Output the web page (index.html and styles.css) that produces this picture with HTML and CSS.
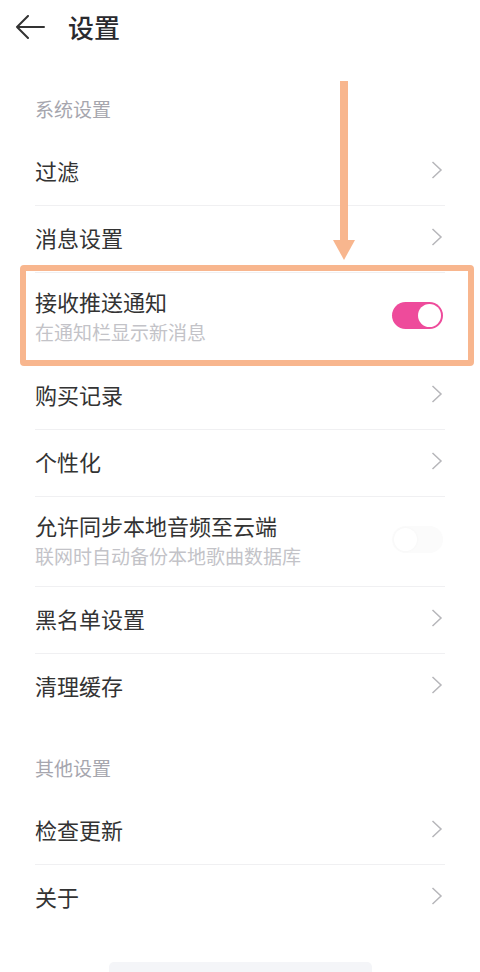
FILE: index.html
```html
<!DOCTYPE html>
<html lang="zh-CN">
<head>
    <meta charset="UTF-8">
    <meta name="viewport" content="width=device-width, initial-scale=1.0">
    <title>设置</title>
    <link rel="stylesheet" href="styles.css">
</head>
<body>
    <div class="page">
        <header class="topbar">
            <svg class="back" viewBox="0 0 30 24" width="30" height="24">
                <path d="M13 1 L2 12 L13 23 M2 12 H29" fill="none" stroke="#333" stroke-width="2" stroke-linecap="round" stroke-linejoin="round"/>
            </svg>
            <h1>设置</h1>
        </header>

        <div class="section-title">系统设置</div>
        <ul class="list">
            <li class="row">
                <div class="row-inner"><span class="label">过滤</span><svg class="chevron" viewBox="0 0 12 18"><path d="M1.5 1 L10 9 L1.5 17"/></svg></div>
            </li>
            <li class="row">
                <div class="row-inner"><span class="label">消息设置</span><svg class="chevron" viewBox="0 0 12 18"><path d="M1.5 1 L10 9 L1.5 17"/></svg></div>
            </li>
            <li class="row row-double highlighted">
                <div class="row-inner">
                    <div class="texts">
                        <span class="label">接收推送通知</span>
                        <span class="sub">在通知栏显示新消息</span>
                    </div>
                    <span class="switch on"><span class="knob"></span></span>
                </div>
                <div class="mark-box"></div>
            </li>
            <li class="row">
                <div class="row-inner"><span class="label">购买记录</span><svg class="chevron" viewBox="0 0 12 18"><path d="M1.5 1 L10 9 L1.5 17"/></svg></div>
            </li>
            <li class="row">
                <div class="row-inner"><span class="label">个性化</span><svg class="chevron" viewBox="0 0 12 18"><path d="M1.5 1 L10 9 L1.5 17"/></svg></div>
            </li>
            <li class="row row-double">
                <div class="row-inner">
                    <div class="texts">
                        <span class="label">允许同步本地音频至云端</span>
                        <span class="sub">联网时自动备份本地歌曲数据库</span>
                    </div>
                    <span class="switch off"><span class="knob"></span></span>
                </div>
            </li>
            <li class="row">
                <div class="row-inner"><span class="label">黑名单设置</span><svg class="chevron" viewBox="0 0 12 18"><path d="M1.5 1 L10 9 L1.5 17"/></svg></div>
            </li>
            <li class="row last">
                <div class="row-inner"><span class="label">清理缓存</span><svg class="chevron" viewBox="0 0 12 18"><path d="M1.5 1 L10 9 L1.5 17"/></svg></div>
            </li>
        </ul>

        <div class="section-title">其他设置</div>
        <ul class="list">
            <li class="row">
                <div class="row-inner"><span class="label">检查更新</span><svg class="chevron" viewBox="0 0 12 18"><path d="M1.5 1 L10 9 L1.5 17"/></svg></div>
            </li>
            <li class="row last">
                <div class="row-inner"><span class="label">关于</span><svg class="chevron" viewBox="0 0 12 18"><path d="M1.5 1 L10 9 L1.5 17"/></svg></div>
            </li>
        </ul>

        <div class="home-bar"></div>

        <!-- annotation arrow pointing at the push row -->
        <svg class="mark-arrow" viewBox="0 0 24 184" width="24" height="184">
            <rect x="8" y="3" width="8" height="162" fill="#f8b68e"/>
            <polygon points="1,162 23,162 12,182" fill="#f8b68e"/>
        </svg>
    </div>
</body>
</html>
```

FILE: styles.css
```css
* {
    box-sizing: border-box;
}

body {
    margin: 0;
    background-color: #ffffff;
    font-family: "Noto Sans CJK SC", "Noto Sans", sans-serif;
    color: #333333;
}

.page {
    position: relative;
    width: 480px;
    min-height: 972px;
    overflow: hidden;
}

.topbar {
    height: 56px;
    margin-bottom: 6px;
    display: flex;
    align-items: center;
    padding-left: 15px;
    padding-bottom: 2px;
}

.back {
    display: block;
    margin-right: 23px;
}

.topbar h1 {
    margin: 0;
    font-size: 26px;
    font-weight: 500;
    color: #2a2a2e;
    line-height: 32px;
}

.section-title {
    padding: 35px 35px 18px;
    font-size: 19px;
    line-height: 24px;
    color: #a6a6ae;
}

.list {
    list-style: none;
    margin: 0;
    padding: 0;
}

.row {
    position: relative;
    padding: 0 35px;
}

.row-inner {
    height: 67px;
    padding-bottom: 4px;
    display: flex;
    align-items: center;
    justify-content: space-between;
    border-bottom: 1px solid #f0f0f2;
}

.row.last .row-inner {
    border-bottom-color: transparent;
}

.row-double .row-inner {
    height: 90px;
}

.texts {
    display: flex;
    flex-direction: column;
}

.label {
    font-size: 22px;
    line-height: 28px;
    color: #333333;
}

.sub {
    margin-top: 4px;
    font-size: 19px;
    line-height: 26px;
    color: #c3c3c8;
}

.chevron {
    width: 12px;
    height: 18px;
    margin-right: 2px;
    fill: none;
    stroke: #b6b6ba;
    stroke-width: 1.5;
}

.switch {
    position: relative;
    width: 51px;
    height: 27px;
    border-radius: 14px;
    margin-right: 2px;
}

.switch .knob {
    position: absolute;
    top: 2px;
    width: 23px;
    height: 23px;
    border-radius: 50%;
    background-color: #ffffff;
}

.switch.on {
    background-color: #ee4b9b;
}

.switch.on .knob {
    right: 2px;
}

.switch.off {
    background-color: #fbfbfb;
}

.switch.off .knob {
    left: 2px;
    box-shadow: 0 0 3px rgba(0, 0, 0, 0.03);
}

.mark-box {
    position: absolute;
    left: 20px;
    right: 6px;
    top: -8px;
    bottom: -3px;
    border: 6px solid #f8b68e;
    border-radius: 4px;
}

.mark-arrow {
    position: absolute;
    left: 332px;
    top: 78px;
}

.home-bar {
    width: 263px;
    height: 10px;
    margin: 30px auto 0;
    border-radius: 5px 5px 0 0;
    background-color: #f4f5f8;
}
```
